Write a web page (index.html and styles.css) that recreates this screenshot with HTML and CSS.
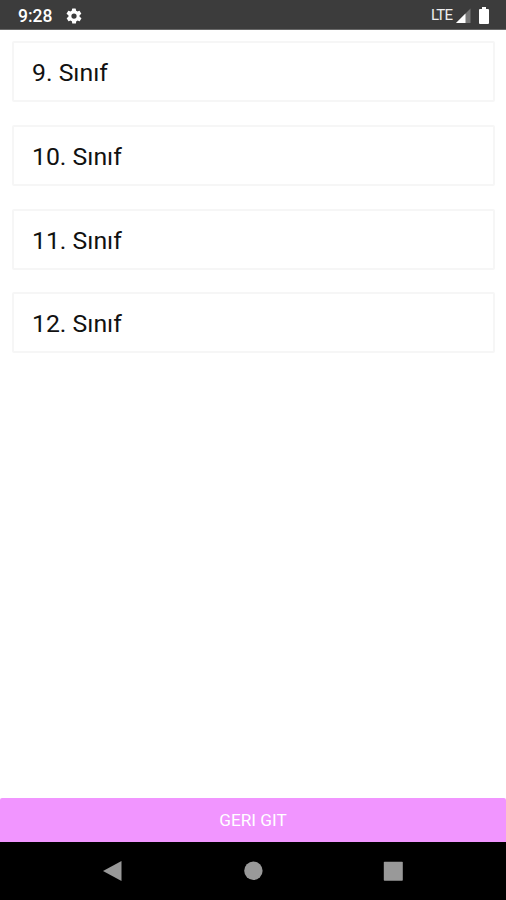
FILE: index.html
```html
<!DOCTYPE html>
<html lang="tr">
<head>
<meta charset="utf-8">
<title>Sınıflar</title>
<link rel="stylesheet" href="styles.css">
</head>
<body>
<div class="screen">
  <header class="status">
    <span class="time">9:28</span>
    <svg class="gear" viewBox="0 0 24 24"><path d="M19.400 13a7.500 7.500 0 0 0 0-2l2.100-1.600a.5.5 0 0 0 .1-.7l-2-3.400a.5.5 0 0 0-.6-.2l-2.500 1a7.300 7.300 0 0 0-1.700-1l-.4-2.600a.5.5 0 0 0-.5-.5h-4a.5.5 0 0 0-.5.500L9 5.100a7.300 7.300 0 0 0-1.700 1l-2.500-1a.5.5 0 0 0-.6.2l-2 3.400a.5.5 0 0 0 .1.700L4.600 11a7.500 7.500 0 0 0 0 2l-2.100 1.600a.5.5 0 0 0-.1.700l2 3.400c.1.200.4.300.6.200l2.500-1a7.300 7.300 0 0 0 1.700 1l.4 2.600c0 .300.200.5.500.5h4c.3 0 .5-.2.5-.5l.4-2.600a7.300 7.300 0 0 0 1.700-1l2.500 1c.2.100.5 0 .6-.2l2-3.400a.5.5 0 0 0-.1-.7zM12 15.500a3.500 3.500 0 1 1 0-7 3.500 3.500 0 0 1 0 7z"/></svg>
    <span class="lte">LTE</span>
    <svg class="signal" viewBox="0 0 15 15"><path class="dim" d="M14.500 .5V15H0z"/><path d="M9.500 5.500V15H0z"/></svg>
    <svg class="battery" viewBox="0 0 10 17"><path d="M3 0h4v2h2q1 0 1 1v13q0 1-1 1H1q-1 0-1-1V3q0-1 1-1h2z"/></svg>
  </header>
  <main class="list">
    <div class="card">9. Sınıf</div>
    <div class="card">10. Sınıf</div>
    <div class="card">11. Sınıf</div>
    <div class="card">12. Sınıf</div>
  </main>
  <button class="back">GERI GIT</button>
  <nav class="nav">
    <svg viewBox="0 0 20 20"><path d="M18.500 0V20L0 10z"/></svg>
    <svg viewBox="0 0 20 20"><circle cx="10.400" cy="9.800" r="9.200"/></svg>
    <svg viewBox="0 0 20 20"><rect x=".8" y=".7" width="19" height="19" rx=".7"/></svg>
  </nav>
</div>
</body>
</html>
```
FILE: styles.css
```css
* { box-sizing: border-box; }
body { margin: 0; font-family: Roboto, sans-serif; background: #fff; }
.screen { width: 506px; height: 900px; display: flex; flex-direction: column; overflow: hidden; }
.status { height: 30px; flex: none; background: #3c3c3c; border-bottom: 1px solid #686868; color: #fff; display: flex; align-items: center; padding: 2px 17px 0 18px; }
.status svg { fill: #fff; flex: none; }
.time { font-size: 17.500px; font-weight: 500; line-height: 28px; width: 47px; }
.gear { width: 18px; height: 18px; }
.lte { margin-left: auto; padding-bottom: 1px; font-size: 15px; letter-spacing: -.7px; width: 25px; color: #eee; }
.signal { width: 15px; height: 15px; margin-right: 8px; }
.status .dim { fill: #777; }
.battery { width: 10px; height: 17px; }
.list { flex: 1; padding: 11.200px 11.500px 12px 12px; display: flex; flex-direction: column; gap: 22.700px; }
.card { height: 61px; flex: none; border: 2px solid #f6f6f6; border-radius: 2px; padding: 1px 18px 0; line-height: 58px; font-size: 24.800px; color: #111; }
.back { height: 44px; flex: none; border: 0; border-radius: 2px 2px 0 0; background: #f195ff; color: #fff; font: 17.200px Roboto, sans-serif; }
.nav { height: 58px; flex: none; background: #000; display: flex; justify-content: space-between; align-items: center; padding: 0 103px; }
.nav svg { width: 20px; height: 20px; fill: #999; }
```
